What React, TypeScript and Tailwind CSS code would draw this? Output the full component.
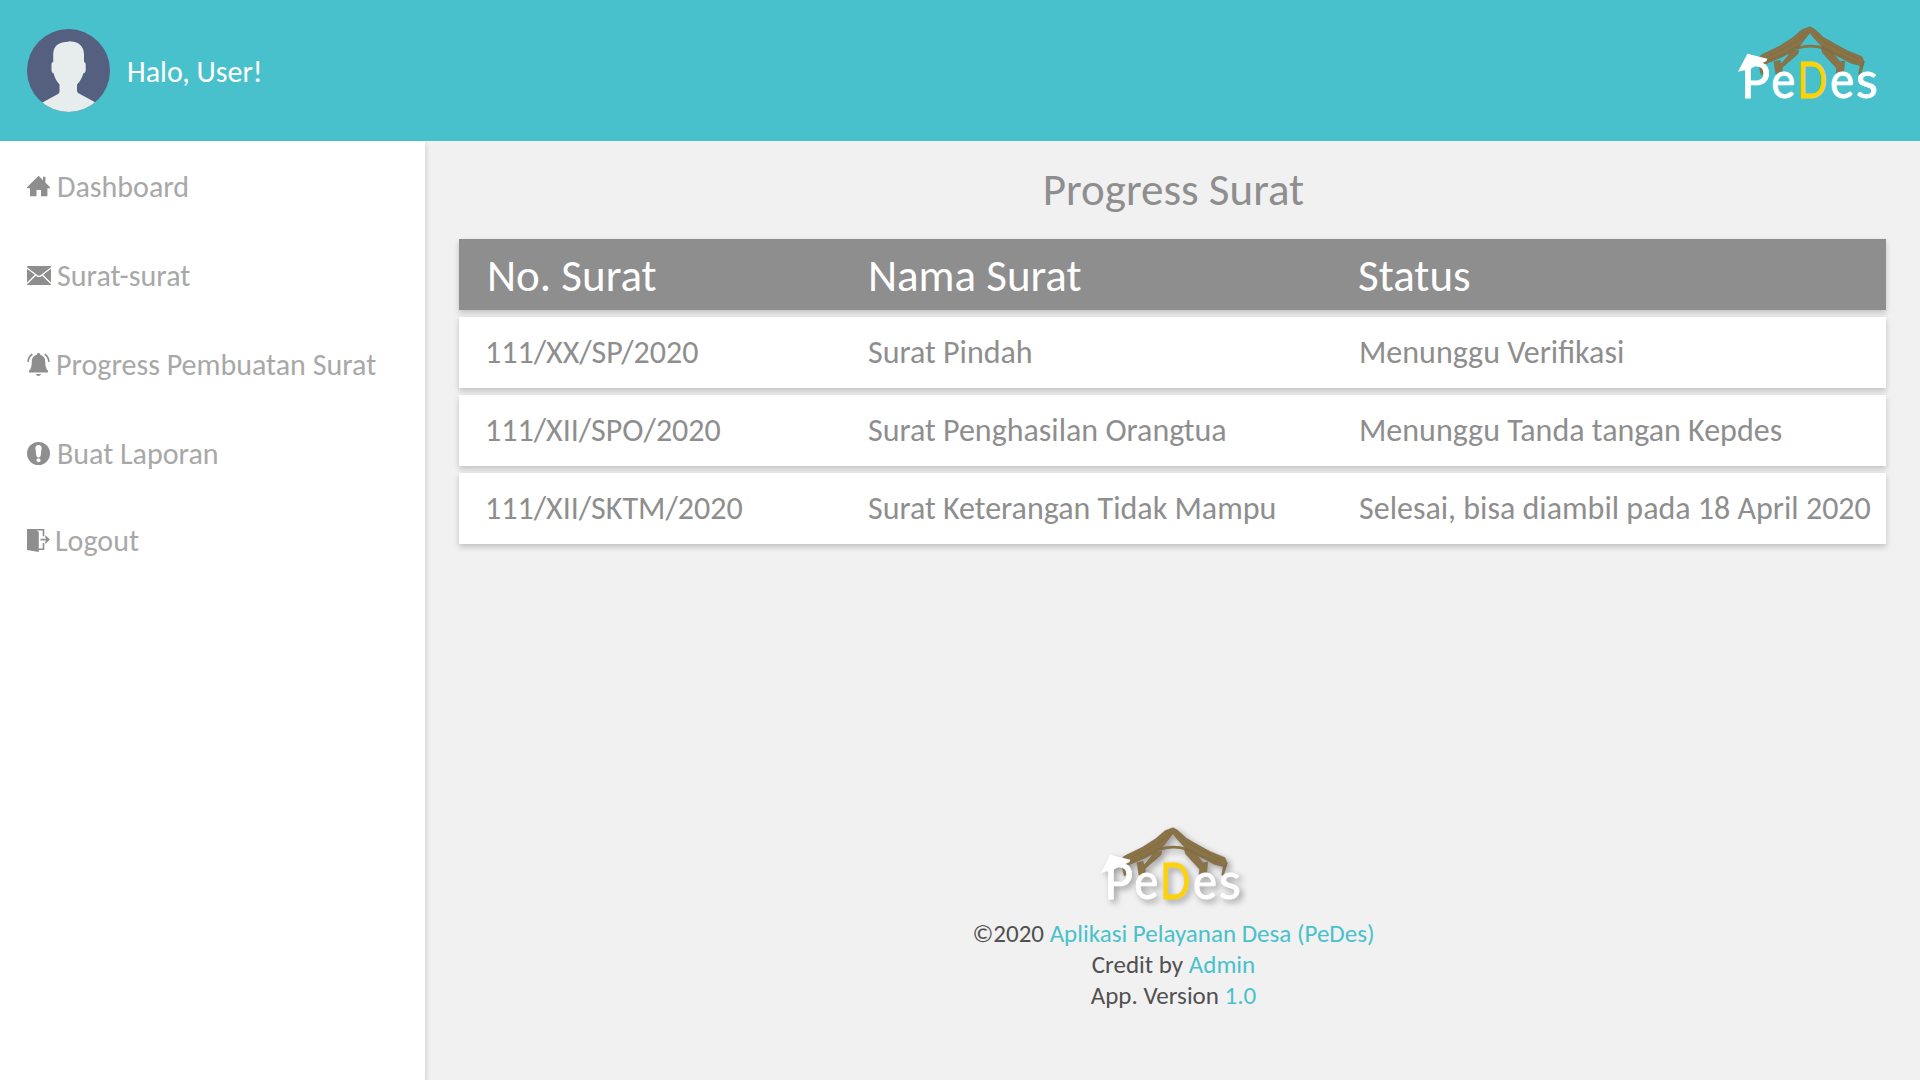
import React from 'react';

function Avatar() {
  return (
    <svg viewBox="0 0 83 83" className="size-[83px] shrink-0" aria-hidden="true">
      <clipPath id="avatar-clip">
        <circle cx="41.5" cy="41.5" r="41.5" />
      </clipPath>
      <g clipPath="url(#avatar-clip)">
        <rect width="83" height="83" fill="#556080" />
        <path
          fill="#e7eced"
          d="M41.5 12.2c9.5 0 15.5 4.300 15.500 13.300v7.500c1 .3 1.700 1.200 1.700 2.500v5.500c0 1.800-.8 3-2.400 3.500-1.300 4.500-3.300 8-6.300 11v6c0 1.400.8 2.300 2 3l17 9.300V83H14v-8.700L31 65c1.200-.7 1.500-1.600 1.500-3v-6.500c-3-3.500-4.700-6.500-5.800-11-1.500-.5-2.200-1.700-2.200-3.500v-5.500c0-1.300.6-2.200 1.700-2.500v-7.500c0-9 6-12.800 15.300-12.800z"
        />
      </g>
    </svg>
  );
}

const letters = [
  { char: 'P', x: 63.8, scale: 0.96, fill: '#fff' },
  { char: 'e', x: 153.7, scale: 0.91, fill: '#fff' },
  { char: 'D', x: 231.7, scale: 0.791, fill: '#fdd20a' },
  { char: 'e', x: 329.7, scale: 0.91, fill: '#fff' },
  { char: 's', x: 408.3, scale: 1.013, fill: '#fff' },
];

function Logo({ className = '' }: { className?: string }) {
  return (
    <svg viewBox="48 42 432 228" className={`h-[76px] w-[144px] overflow-visible ${className}`} role="img" aria-label="PeDes">
      <g fill="#8a7347" stroke="#75603a" strokeWidth="1.5" strokeLinejoin="round">
        <path d="M119 160l10 0 0 28-5 4-4-14zM422 158l11-6-5 18-7 22-5-3z" />
        <path d="M232 112Q270 99 312 112" fill="none" stroke="#8a7347" strokeWidth="8" />
        <path d="M212 122l24-6-2 12-48 42 2 20h-20l-6-38 18-4 3 12 20-24z" />
        <path d="M304 112l26 4 20 24 10 12 14-2-4 40h-22l2-18-42-46z" />
        <path d="M270 47l14 8 26 24 42 24 30 16 44 18 6 16-6 12-32-8-46-24-36-20-30-32-12-16-16 20-20 27-48 26-48 20-16 2-10-16 12-12 54-26 40-26 28-24z" />
        <path d="M264 60l-34 32-84 44M276 60l42 36 96 48M236 104l-50 28-50 20M310 108l50 26 50 20" fill="none" strokeWidth="1.2" />
      </g>
      <g fontFamily="Lato, sans-serif" fontSize="150" strokeWidth="2.500">
        {letters.map(({ char, x, scale, fill }) => (
          <text key={x} transform={`translate(${x} 261.5) scale(${scale} 1)`} fill={fill} stroke={fill}>
            {char}
          </text>
        ))}
      </g>
      <path fill="#fff" d="M82 128l60 15-3 8-28 12-26 14-5 6-7-5-19 4z" />
    </svg>
  );
}

const icon = 'w-[23px] h-[23px] shrink-0 text-[#8e8e8e]';

const HomeIcon = () => (
  <svg viewBox="0 0 23 23" className={icon} fill="currentColor">
    <path d="M11.6.8 16 5.200V1.800h2.400v5.700L23 12.200v1.100h-2.600v8H14v-6.400H9.500v6.400H3v-8H0v-1.100z" />
  </svg>
);

const MailIcon = () => (
  <svg viewBox="0 0 24 23" className="h-[23px] w-[24px] shrink-0 text-[#8e8e8e]" fill="currentColor">
    <rect y="2" width="24" height="19" rx=".8" />
    <path d="M0 4l9.800 7.600q2.200 1.600 4.400 0L24 4M0 19.500l8.600-8.500M24 19.500L15.400 11" fill="none" stroke="#fff" strokeWidth="1.300" />
  </svg>
);

const BellIcon = () => (
  <svg viewBox="0 0 23 23" className={icon} fill="currentColor">
    <path d="M11.5 0c1 0 1.700.7 1.800 1.700 3.300.8 4.900 3.300 4.900 6.800 0 4.300.7 7.500 2.800 9.300v1.700H2v-1.700c2.100-1.800 2.800-5 2.800-9.300 0-3.500 1.600-6 4.900-6.800C9.800.7 10.500 0 11.500 0zM9 21h5c-.2 1.200-1.200 2-2.500 2S9.200 22.200 9 21z" />
    <path d="M5.300 1.300C2.800 3 1.300 5.500 1 8.800M17.700 1.300C20.200 3 21.700 5.500 22 8.800" fill="none" stroke="currentColor" strokeWidth="1.700" />
  </svg>
);

const AlertIcon = () => (
  <svg viewBox="0 0 23 23" className={icon} fill="currentColor">
    <circle cx="11.500" cy="11.500" r="11.500" />
    <path fill="#fff" d="M11.500 3c2 0 3.200 1.200 3.100 3l-.9 7.400c-.2 1.200-1 2-2.200 2s-2-.8-2.200-2L8.400 6c-.1-1.800 1.100-3 3.100-3z" />
    <circle cx="11.500" cy="18.200" r="2" fill="#fff" />
  </svg>
);

const LogoutIcon = () => (
  <svg viewBox="0 0 23 23" className={icon} fill="currentColor">
    <path d="M0 0h8l3.800 3v20L0 21z" />
    <path d="M7 .8h9.500v6.400M11 20.300h5.500v-6.400" fill="none" stroke="currentColor" strokeWidth="1.600" />
    <path d="M13.500 10.600h7" stroke="currentColor" strokeWidth="1.700" />
    <path d="M18.300 6.300l4.700 4.300-4.700 4.300v-2.400l1.600-1.900-1.600-1.900z" />
  </svg>
);

const menu = [
  { label: 'Dashboard', Icon: HomeIcon, className: 'gap-[7px]' },
  { label: 'Surat-surat', Icon: MailIcon, className: 'gap-[6px]' },
  { label: 'Progress Pembuatan Surat', Icon: BellIcon, className: 'gap-[6px]' },
  { label: 'Buat Laporan', Icon: AlertIcon, className: 'gap-[7px]' },
  { label: 'Logout', Icon: LogoutIcon, className: 'gap-[5px] -mt-0.5' },
];

const rows = [
  ['111/XX/SP/2020', 'Surat Pindah', 'Menunggu Verifikasi'],
  ['111/XII/SPO/2020', 'Surat Penghasilan Orangtua', 'Menunggu Tanda tangan Kepdes'],
  ['111/XII/SKTM/2020', 'Surat Keterangan Tidak Mampu', 'Selesai, bisa diambil pada 18 April 2020'],
];

const rowClass = 'grid h-[71px] items-center whitespace-nowrap shadow-[0_3px_6px_rgba(0,0,0,0.2)]';

export default function App() {
  return (
    <div className="flex h-[1080px] w-[1920px] flex-col overflow-hidden bg-[#f1f1f1] font-[Calibri,Carlito,Lato,sans-serif]">
      <header className="flex h-[141px] shrink-0 items-center justify-between bg-[#49c1cc] pr-10 pl-[27px]">
        <div className="flex items-center gap-[17px]">
          <Avatar />
          <span className="pt-0.5 text-[30px] leading-10 text-white">Halo, User!</span>
        </div>
        <Logo className="mb-[16px]" />
      </header>

      <div className="flex flex-1">
        <nav className="flex w-[425px] shrink-0 flex-col gap-[49px] bg-white pt-[25px] pl-[27px] shadow-[0_3px_6px_rgba(0,0,0,0.2)]">
          {menu.map(({ label, Icon, className }) => (
            <a key={label} className={`flex h-10 items-center text-[30px] leading-10 text-[#a8a8a8] ${className}`}>
              <Icon />
              <span className="pt-px">{label}</span>
            </a>
          ))}
        </nav>

        <main className="flex flex-1 flex-col px-[34px] pt-6">
          <h1 className="mb-6 pl-0.5 text-center text-[45px] leading-[50px] text-[#8e8e8e]">Progress Surat</h1>

          <div className="flex flex-col gap-[7px]">
            <div className={`${rowClass} grid-cols-[381px_490px_1fr] bg-[#8e8e8e] pt-0.5 pl-7 text-[45px] text-white`}>
              <span>No. Surat</span>
              <span>Nama Surat</span>
              <span>Status</span>
            </div>
            {rows.map((cells) => (
              <div key={cells[0]} className={`${rowClass} grid-cols-[383px_491px_1fr] bg-white pt-px pl-[26px] text-[32px] text-[#8e8e8e]`}>
                {cells.map((cell) => (
                  <span key={cell}>{cell}</span>
                ))}
              </div>
            ))}
          </div>

          <footer className="mt-auto flex flex-col items-center pb-[69px] pl-0.5 text-center text-[25px] leading-[31px] text-[#505050]">
            <Logo className="mr-[5px] mb-[16px] drop-shadow-[3px_3px_3px_rgba(0,0,0,0.35)]" />
            <p>
              ©2020 <span className="text-[#49c1cc]">Aplikasi Pelayanan Desa (PeDes)</span>
            </p>
            <p>
              Credit by <span className="text-[#49c1cc]">Admin</span>
            </p>
            <p>
              App. Version <span className="text-[#49c1cc]">1.0</span>
            </p>
          </footer>
        </main>
      </div>
    </div>
  );
}
